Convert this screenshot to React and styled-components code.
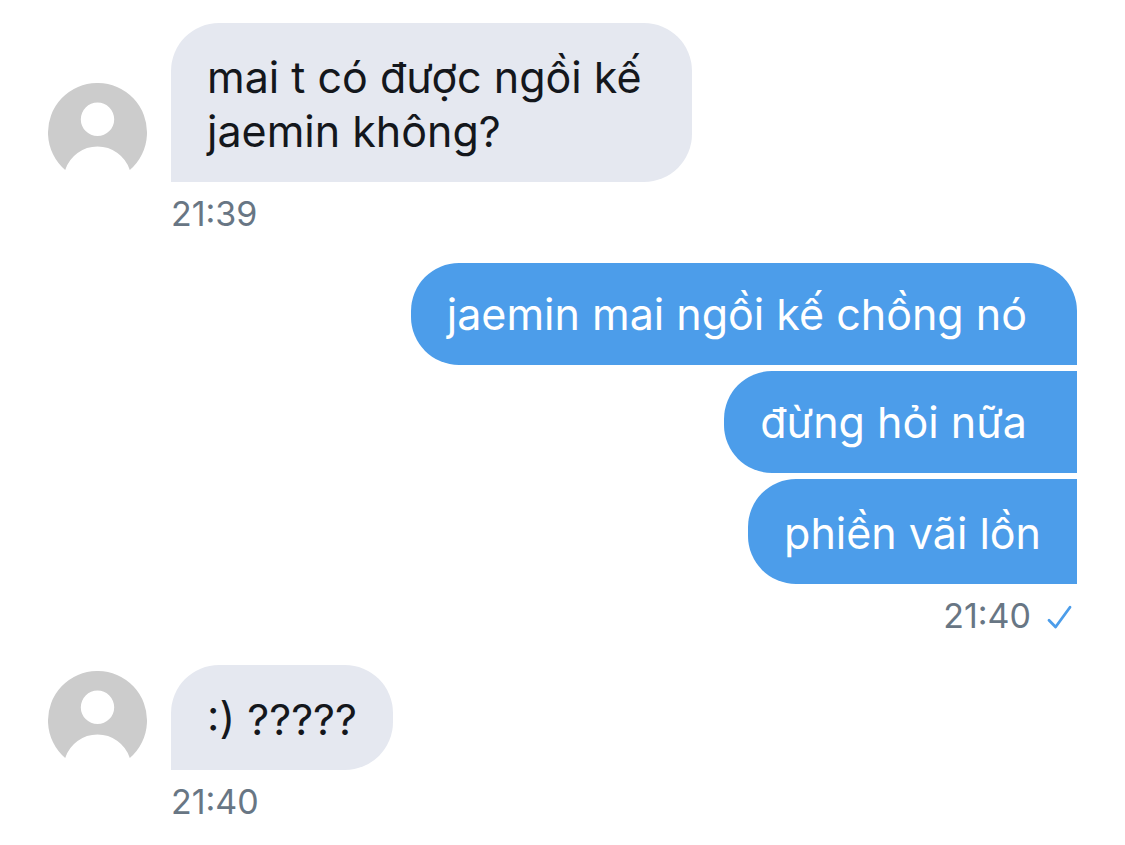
import React from "react";
import styled, { createGlobalStyle } from "styled-components";

const GlobalStyle = createGlobalStyle`
  *, *::before, *::after { box-sizing: border-box; }
  body {
    margin: 0;
    background: #ffffff;
    font-family: Inter, "Liberation Sans", sans-serif;
  }
`;

const Conversation = styled.main`
  display: flex;
  flex-direction: column;
  gap: 29px;
  padding: 23px 48px 24px;
`;

const Group = styled.section`
  display: flex;
  flex-direction: column;
  align-items: ${(p) => (p.$sent ? "flex-end" : "flex-start")};
`;

const Row = styled.div`
  display: flex;
  align-items: flex-end;
  gap: 24px;
`;

const Stack = styled.div`
  display: flex;
  flex-direction: column;
  align-items: flex-end;
  gap: 6px;
`;

const Bubble = styled.p`
  margin: 0;
  padding: ${(p) => (p.$compact ? "24px" : "27px")}
    ${(p) => (p.$roomy ? "50px" : "36px")} 24px 36px;
  font-size: 43px;
  line-height: 54px;
`;

const ReceivedBubble = styled(Bubble)`
  background: #e5e8f0;
  color: #14171c;
  border-radius: 48px 48px 48px 0;
`;

const SentBubble = styled(Bubble)`
  background: #4c9dea;
  color: #ffffff;
  border-radius: 48px ${(p) => (p.$first ? "48px" : "0")} 0 48px;
`;

const Meta = styled.div`
  display: flex;
  align-items: center;
  gap: 16px;
  margin-top: 12px;
  padding-left: ${(p) => (p.$sent ? "0" : "123px")};
  color: #687684;
  font-size: 34px;
  line-height: 40px;
`;

const AvatarDrawing = styled.svg`
  display: block;
  flex: none;
  width: 99px;
  height: 99px;
`;

const CheckDrawing = styled.svg`
  display: block;
  width: 30px;
  height: 30px;
`;

function Avatar() {
  return (
    <AvatarDrawing viewBox="0 0 99 99" role="img" aria-label="Avatar">
      <path
        fill="#cccccc"
        fillRule="evenodd"
        d="M17.2 87A49.5 49.5 0 1 1 81.8 87A34 34 0 0 0 17.2 87ZM49.5 19.6a16.7 16.7 0 1 0 0 33.4a16.7 16.7 0 1 0 0-33.4Z"
      />
    </AvatarDrawing>
  );
}

function Check() {
  return (
    <CheckDrawing viewBox="0 0 30 30" role="img" aria-label="Seen">
      <path
        d="M2 19.2L8.6 26L23 6.2"
        fill="none"
        stroke="#4c9dea"
        strokeWidth="2.8"
        strokeLinecap="round"
        strokeLinejoin="round"
      />
    </CheckDrawing>
  );
}

export default function App() {
  return (
    <>
      <GlobalStyle />
      <Conversation lang="vi">
        <Group>
          <Row>
            <Avatar />
            <ReceivedBubble $roomy>
              mai t có được ngồi kế
              <br />
              jaemin không?
            </ReceivedBubble>
          </Row>
          <Meta>
            <time>21:39</time>
          </Meta>
        </Group>

        <Group $sent>
          <Stack>
            <SentBubble $first $compact $roomy>
              jaemin mai ngồi kế chồng nó
            </SentBubble>
            <SentBubble $compact $roomy>
              đừng hỏi nữa
            </SentBubble>
            <SentBubble>phiền vãi lồn</SentBubble>
          </Stack>
          <Meta $sent>
            <time>21:40</time>
            <Check />
          </Meta>
        </Group>

        <Group>
          <Row>
            <Avatar />
            <ReceivedBubble>:) ?????</ReceivedBubble>
          </Row>
          <Meta>
            <time>21:40</time>
          </Meta>
        </Group>
      </Conversation>
    </>
  );
}
